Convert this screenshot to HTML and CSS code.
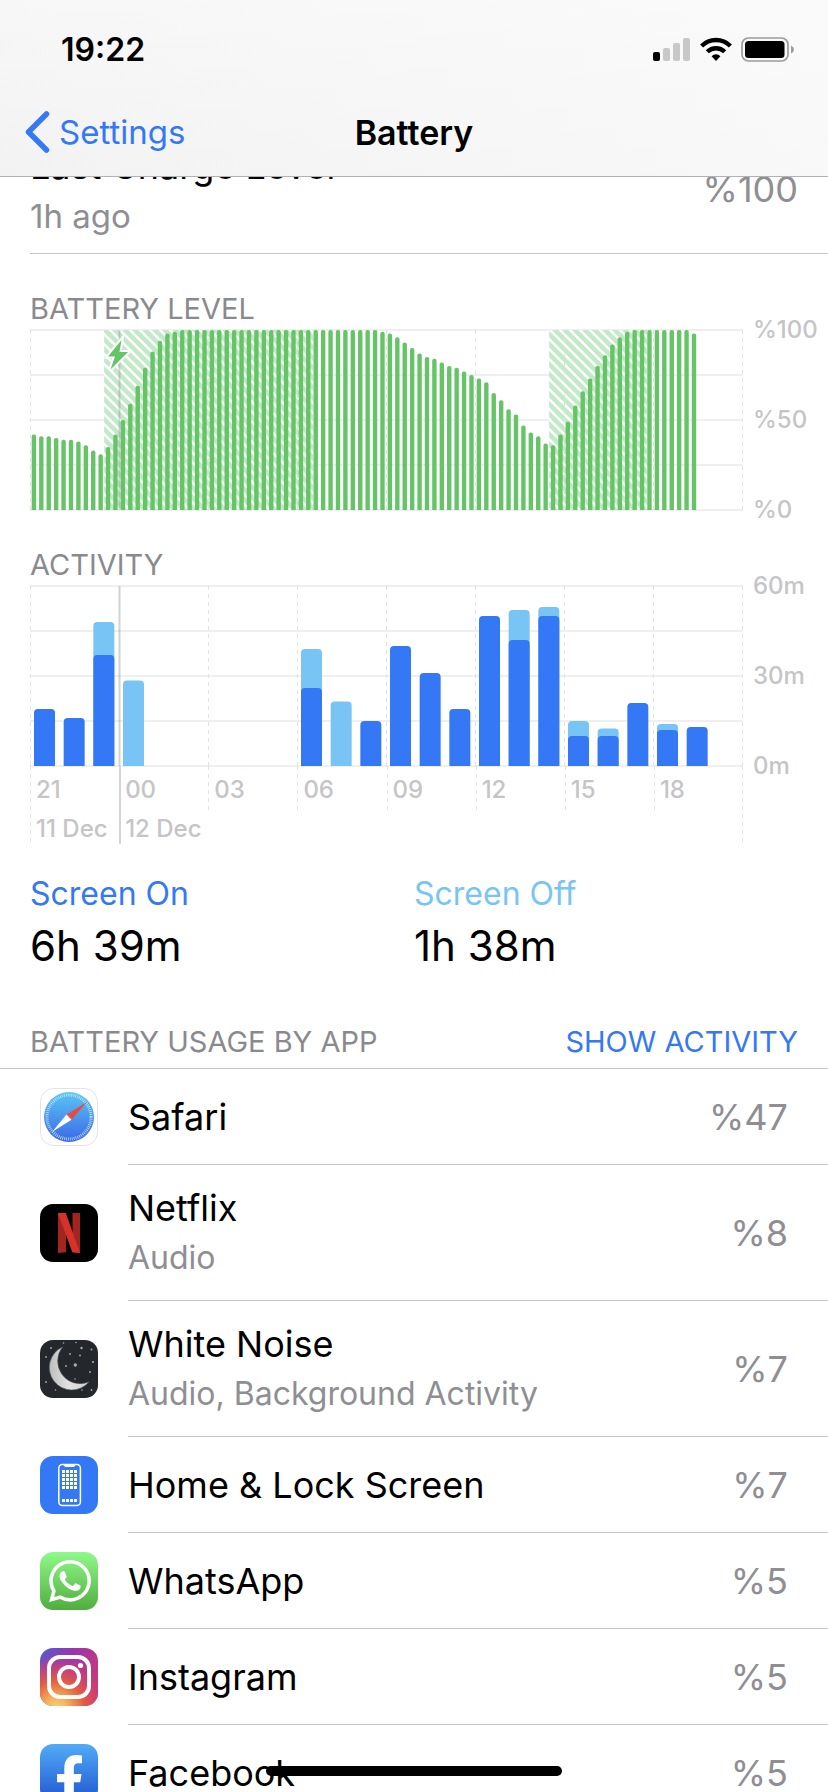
FILE: index.html
```html
<!DOCTYPE html>
<html lang="en">
<head>
<meta charset="utf-8">
<meta name="viewport" content="width=device-width">
<title>Battery</title>
<link rel="stylesheet" href="styles.css">
</head>
<body>
<div class="screen">
  <header class="topbar">
    <div class="status">
      <time class="clock">19:22</time>
      <div class="status-icons">
        <svg width="38" height="25" viewBox="0 0 38 25" aria-label="Signal">
          <rect x="0" y="15" width="7" height="9" rx="2"/>
          <g fill="#c8c8c8"><rect x="10" y="11" width="7" height="13" rx="2"/><rect x="20" y="6" width="7" height="18" rx="2"/><rect x="30" y="1" width="7" height="23" rx="2"/></g>
        </svg>
        <svg width="32" height="25" viewBox="0 0 32 25" aria-label="Wi-Fi">
          <g fill="none" stroke="#000" stroke-width="4.4"><path d="M1.6 9a20.400 20.400 0 0 1 28.800 0"/><path d="M7.300 14.800a12.300 12.300 0 0 1 17.400 0"/></g>
          <path d="M11.600 19.200a6.200 6.200 0 0 1 8.800 0L16 24z"/>
        </svg>
        <svg width="54" height="25" viewBox="0 0 54 25" aria-label="Battery full">
          <rect x="1" y="1" width="46" height="23" rx="6.500" fill="none" stroke="#9b9b9b" stroke-width="1.700"/>
          <rect x="4" y="4" width="39.500" height="17" rx="3.500"/>
          <path d="M50 8.500q3 1.500 3 4t-3 4z" fill="#9b9b9b"/>
        </svg>
      </div>
    </div>
    <nav class="nav">
      <a class="back" href="#settings">
        <svg width="25" height="42" viewBox="0 0 25 42" aria-hidden="true"><path d="M21.500 3L3.500 21L21.500 39" fill="none" stroke="currentColor" stroke-width="5.500" stroke-linecap="round" stroke-linejoin="round"/></svg>
        Settings
      </a>
      <h1 class="title">Battery</h1>
    </nav>
  </header>

  <main class="content">
    <section class="last-charge">
      <div>
        <p class="name">Last Charge Level</p>
        <p class="sub">1h ago</p>
      </div>
      <span class="value">%100</span>
    </section>

    <section class="charts">
      <h2 class="caption">BATTERY LEVEL</h2>
      <div class="chart">
        <svg class="plot" id="level" viewBox="0 0 713 180" role="img" aria-label="Battery level"></svg>
        <div class="scale"><span>%100</span><span>%50</span><span>%0</span></div>
      </div>
      <h2 class="caption caption-next">ACTIVITY</h2>
      <div class="chart">
        <svg class="plot" id="activity" viewBox="0 0 713 180" role="img" aria-label="Activity"></svg>
        <div class="scale"><span>60m</span><span>30m</span><span>0m</span></div>
      </div>
      <div class="time-axis">
        <div class="hours"><span>21</span><span class="midnight">00</span><span>03</span><span>06</span><span>09</span><span>12</span><span>15</span><span>18</span></div>
        <div class="days"><span>11 Dec</span><span class="midnight">12 Dec</span></div>
      </div>
    </section>

    <dl class="totals">
      <div><dt class="on">Screen On</dt><dd>6h 39m</dd></div>
      <div><dt class="off">Screen Off</dt><dd>1h 38m</dd></div>
    </dl>

    <section>
      <div class="usage-head">
        <h2 class="caption">BATTERY USAGE BY APP</h2>
        <button class="toggle" type="button">SHOW ACTIVITY</button>
      </div>
      <ul class="apps">
        <li class="app">
          <svg class="icon" viewBox="0 0 58 58" aria-hidden="true">
            <defs><linearGradient id="safari" x2="0" y2="1"><stop stop-color="#5ac6f4"/><stop offset="1" stop-color="#3a68e8"/></linearGradient></defs>
            <rect x=".5" y=".5" width="57" height="57" rx="13" fill="#fff" stroke="#e3e3e3"/>
            <circle cx="29" cy="29" r="25" fill="url(#safari)"/>
            <circle cx="29" cy="29" r="22" fill="none" stroke="#d5ebfb" stroke-width="3" stroke-dasharray=".7 1.220"/>
            <path d="M47 14L31.500 31.800L26.500 26.500z" fill="#eb4b3d"/>
            <path d="M12 44L26.500 26.500L31.500 31.800z" fill="#fff"/>
          </svg>
          <div class="row"><p class="name">Safari</p><span class="value">%47</span></div>
        </li>
        <li class="app">
          <svg class="icon" viewBox="0 0 58 58" aria-hidden="true">
            <rect width="58" height="58" rx="13"/>
            <path d="M18 9h8v39.300l-8 .7zM32.500 9H40v40l-7.500-.7z" fill="#a3251f"/>
            <path d="M18 9h7.800L40 49l-7.700-.8z" fill="#d7322a"/>
          </svg>
          <div class="row"><div><p class="name">Netflix</p><p class="sub">Audio</p></div><span class="value">%8</span></div>
        </li>
        <li class="app">
          <svg class="icon" viewBox="0 0 58 58" aria-hidden="true">
            <defs><linearGradient id="moon"><stop stop-color="#bdbdbd"/><stop offset=".5" stop-color="#e2e2e2"/><stop offset="1" stop-color="#cfcfcf"/></linearGradient></defs>
            <rect width="58" height="58" rx="13" fill="#24272c"/>
            <path d="M22.500 7A22.500 22.500 0 1 0 49 42A22.700 22.700 0 0 1 22.500 7z" fill="url(#moon)" stroke="#55585c" stroke-width=".6"/>
            <g fill="#a9abad"><circle cx="35.300" cy="25" r="1.700"/><circle cx="41.500" cy="8" r="1.200"/><circle cx="53" cy="22" r="1.100"/><circle cx="30" cy="14" r=".9"/><circle cx="40" cy="15.500" r=".9"/><circle cx="26" cy="26" r=".9"/><circle cx="50" cy="32" r=".9"/><circle cx="35" cy="39" r=".8"/><circle cx="11" cy="8" r=".9"/><circle cx="6" cy="17" r=".9"/><circle cx="6" cy="42" r=".9"/><circle cx="23.500" cy="3" r=".8"/><circle cx="36" cy="2.500" r=".8"/><circle cx="51.500" cy="9.500" r=".9"/><circle cx="15.500" cy="50" r=".8"/><circle cx="42" cy="50" r=".8"/><circle cx="51.500" cy="50" r=".9"/></g>
          </svg>
          <div class="row"><div><p class="name">White Noise</p><p class="sub">Audio, Background Activity</p></div><span class="value">%7</span></div>
        </li>
        <li class="app">
          <svg class="icon" viewBox="0 0 58 58" aria-hidden="true">
            <rect width="58" height="58" rx="13" fill="#3478f6"/>
            <rect x="18.800" y="8.500" width="21.600" height="41" rx="3.500" fill="none" stroke="#fff" stroke-width="1.500"/>
            <path d="M23.500 8h12q-.3 3-2.300 3h-7.400q-2 0-2.300-3z" fill="#fff"/>
            <g stroke="#fff" stroke-width="3" stroke-dasharray="3 1"><path d="M22 15.500h15M22 19.500h15M22 23.500h15M22 27.500h15M22 31.500h15M22 44.500h15"/></g>
          </svg>
          <div class="row"><p class="name">Home &amp; Lock Screen</p><span class="value">%7</span></div>
        </li>
        <li class="app">
          <svg class="icon" viewBox="0 0 58 58" aria-hidden="true">
            <defs><linearGradient id="whatsapp" x2="0" y2="1"><stop stop-color="#90f98b"/><stop offset="1" stop-color="#4fae3d"/></linearGradient></defs>
            <rect width="58" height="58" rx="13" fill="url(#whatsapp)"/>
            <g transform="translate(9 8) scale(1.750)" fill="#fff"><path d="M17.472 14.382c-.297-.149-1.758-.867-2.030-.967-.273-.099-.471-.148-.67.15-.197.297-.767.966-.94 1.164-.173.199-.347.223-.644.075-.297-.15-1.255-.463-2.390-1.475-.883-.788-1.480-1.761-1.653-2.059-.173-.297-.018-.458.13-.606.134-.133.298-.347.446-.52.149-.174.198-.298.298-.497.099-.198.05-.371-.025-.52-.075-.149-.669-1.612-.916-2.207-.242-.579-.487-.5-.669-.51-.173-.008-.371-.01-.57-.01-.198 0-.52.074-.792.372-.272.297-1.040 1.016-1.040 2.479 0 1.462 1.065 2.875 1.213 3.074.149.198 2.096 3.200 5.077 4.487.709.306 1.262.489 1.694.625.712.227 1.360.195 1.871.118.571-.085 1.758-.719 2.006-1.413.248-.694.248-1.289.173-1.413-.074-.124-.272-.198-.57-.347m-5.421 7.403h-.004a9.870 9.870 0 0 1-5.031-1.378l-.361-.214-3.741.982.998-3.648-.235-.374a9.860 9.860 0 0 1-1.510-5.260c.001-5.450 4.436-9.884 9.888-9.884 2.640 0 5.122 1.030 6.988 2.898a9.825 9.825 0 0 1 2.893 6.994c-.003 5.450-4.437 9.884-9.885 9.884m8.413-18.297A11.815 11.815 0 0 0 12.050 0C5.495 0 .16 5.335.157 11.892c0 2.096.547 4.142 1.588 5.945L.057 24l6.305-1.654a11.882 11.882 0 0 0 5.683 1.448h.005c6.554 0 11.890-5.335 11.893-11.893a11.821 11.821 0 0 0-3.480-8.413z"/></g>
          </svg>
          <div class="row"><p class="name">WhatsApp</p><span class="value">%5</span></div>
        </li>
        <li class="app">
          <svg class="icon" viewBox="0 0 58 58" aria-hidden="true">
            <defs>
              <linearGradient id="insta-base" x1="0" y1="0" x2="1" y2=".6"><stop stop-color="#4b5fd0"/><stop offset=".45" stop-color="#9a35ae"/><stop offset="1" stop-color="#cb3a72"/></linearGradient>
              <radialGradient id="insta-glow" cx=".28" cy="1.050" r=".95"><stop stop-color="#f8d27c"/><stop offset=".2" stop-color="#f3b45f"/><stop offset=".5" stop-color="#e5603f"/><stop offset=".78" stop-color="#cf3f72" stop-opacity=".7"/><stop offset="1" stop-color="#b03a9a" stop-opacity="0"/></radialGradient>
            </defs>
            <rect width="58" height="58" rx="13" fill="url(#insta-base)"/>
            <rect width="58" height="58" rx="13" fill="url(#insta-glow)"/>
            <g fill="none" stroke="#fff" stroke-width="4"><rect x="9" y="9" width="40" height="40" rx="11"/><circle cx="29" cy="29" r="10"/></g>
            <circle cx="40.500" cy="17.500" r="2.600" fill="#fff"/>
          </svg>
          <div class="row"><p class="name">Instagram</p><span class="value">%5</span></div>
        </li>
        <li class="app">
          <svg class="icon" viewBox="0 0 58 58" aria-hidden="true">
            <defs><linearGradient id="facebook" x2="0" y2="1"><stop stop-color="#51abf7"/><stop offset="1" stop-color="#2055cf"/></linearGradient></defs>
            <rect width="58" height="58" rx="13" fill="url(#facebook)"/>
            <path d="M24.300 58V38.300H17V30h7.300v-6c0-8.500 4.700-13 12-13 2.200 0 4 .2 5.700.5v7.700h-3.500c-3.500 0-4.700 2-4.700 4.600V30h7.700l-1.300 8.300h-6.400V58z" fill="#fff"/>
          </svg>
          <div class="row"><p class="name">Facebook</p><span class="value">%5</span></div>
        </li>
      </ul>
    </section>
  </main>
  <div class="home-indicator"></div>
</div>
<script src="charts.js"></script>
</body>
</html>
```
FILE: styles.css
```css
* { box-sizing: border-box; margin: 0; padding: 0; }

body {
  background: #fff;
  color: #000;
  font-family: Inter, "Liberation Sans", sans-serif;
}

.screen {
  position: relative;
  height: 100vh;
  overflow: hidden;
}

/* Status and navigation bars */
.topbar {
  position: relative;
  z-index: 1;
  background: linear-gradient(100deg, rgba(242, 242, 242, 0.4), rgba(250, 250, 250, 0.8)), linear-gradient(#fbfbfb, #f2f2f2);
  border-bottom: 1px solid #b2b2b4;
}

.status {
  display: flex;
  align-items: center;
  justify-content: space-between;
  height: 88px;
  padding: 11px 33px 0 61px;
}

.clock { font-size: 32px; font-weight: 600; }

.status-icons { display: flex; align-items: center; gap: 9px; }

.nav {
  display: grid;
  grid-template-columns: 1fr auto 1fr;
  align-items: center;
  height: 88px;
  padding: 0 25px;
}

.back {
  display: flex;
  align-items: center;
  gap: 9px;
  color: #3478f6;
  font-size: 33px;
  text-decoration: none;
}

.title { font-size: 34px; font-weight: 600; }

/* Scrolled content */
.content { margin-top: -36px; }

.name { font-size: 36px; line-height: 50px; }
.sub { color: #8e8e93; font-size: 32px; line-height: 50px; }
.value { color: #8e8e93; font-size: 36px; }

.last-charge {
  display: flex;
  align-items: flex-start;
  justify-content: space-between;
  margin-left: 30px;
  padding: 0 30px 12px 0;
  border-bottom: 1px solid #c6c6c8;
}
.last-charge .sub { font-size: 33px; }
.last-charge .value { line-height: 96px; height: 96px; }

.caption {
  color: #8a8a8e;
  font-size: 29px;
  font-weight: 400;
  line-height: 36px;
}

/* Charts */
.charts { padding: 37px 0 0 30px; }
.charts .caption { margin-bottom: 3px; }
.charts .caption-next { margin-top: 37px; }

.chart { display: flex; }

.plot {
  display: block;
  flex: 1;
  min-width: 0;
  overflow: visible;
}

.scale {
  display: flex;
  flex-direction: column;
  justify-content: space-between;
  width: 85px;
  margin: -14px 0;
  padding-left: 10px;
}

.scale, .time-axis {
  color: #c5c5c7;
  font-size: 24px;
  font-weight: 500;
  line-height: 28px;
}

.grid-line { stroke: #efefef; stroke-width: 2; }
.hour-line { stroke: #e2e2e4; stroke-width: 1; stroke-dasharray: 4 4; }
.midnight-line { stroke: #8e8e93; stroke-opacity: 0.4; stroke-width: 2; }
.charging { fill: url(#hatch); }
.level-bar { fill: #65c466; }
.screen-off { fill: #78c5f5; }
.screen-on { fill: #3478f6; }

.time-axis {
  margin-right: 85px;
  background: repeating-linear-gradient(#e2e2e4 0 4px, transparent 4px 8px) right / 1px 100% no-repeat;
}

.hours, .days { display: grid; grid-template-columns: repeat(8, 1fr); }
.hours { line-height: 48px; }
.days { line-height: 30px; }
.days .midnight { grid-column: span 7; }

.hours span, .days span {
  padding-left: 6px;
  white-space: nowrap;
  background: repeating-linear-gradient(#e2e2e4 0 4px, transparent 4px 8px) left / 1px 100% no-repeat;
}

.hours .midnight, .days .midnight {
  background: linear-gradient(#d4d4d6, #d4d4d6) left / 2px 100% no-repeat;
}

/* Totals */
.totals {
  display: grid;
  grid-template-columns: 1fr 1fr;
  padding-top: 28px;
}
.totals div:first-child { padding-left: 30px; }
.totals dt { font-size: 32px; line-height: 44px; }
.totals dd { font-size: 42px; line-height: 60px; }
.on { color: #3478f6; }
.off { color: #78c5f5; }

/* Usage list */
.usage-head {
  display: flex;
  justify-content: space-between;
  padding: 48px 30px 8px;
  border-bottom: 1px solid #c6c6c8;
}

.toggle {
  border: 0;
  background: none;
  color: #3478f6;
  font: inherit;
  font-size: 29px;
  line-height: 36px;
}

.apps { list-style: none; }

.app {
  display: flex;
  align-items: center;
  gap: 30px;
  padding-left: 40px;
}

.icon { display: block; flex: none; width: 58px; height: 58px; }

.row {
  display: flex;
  flex: 1;
  align-items: center;
  justify-content: space-between;
  min-height: 96px;
  padding: 18px 40px 17px 0;
  border-bottom: 1px solid #c6c6c8;
}

.home-indicator {
  position: absolute;
  bottom: 16px;
  left: 50%;
  width: 296px;
  height: 10px;
  margin-left: -148px;
  border-radius: 5px;
  background: #000;
}
```
FILE: charts.js
```js
const HEIGHT = 180;
const WIDTH = 712;

// Charge in percent, one value for every quarter of an hour.
const level = [
  42, 41, 41, 40, 39, 39, 38, 36, 33, 31, 35, 42, 50, 59, 69, 79, 88, 94, 98, 99,
  ...Array(27).fill(100),
  99, 98, 96, 93, 90, 87, 85, 84, 82, 80, 79, 77, 75, 73, 71, 65, 61, 56, 53, 47,
  43, 41, 37, 36, 42, 49, 58, 66, 73, 80, 86, 92, 96, 99,
  ...Array(8).fill(100),
  98
];

// First quarter and number of quarters spent charging.
const charging = [[10, 28], [70, 13]];

// Minutes per hour: [in use, with the screen on].
const activity = [
  [19, 19], [16, 16], [48, 37], [28.5, 0], [0, 0], [0, 0], [0, 0], [0, 0], [0, 0],
  [39, 26], [21.5, 0], [15, 15], [40, 40], [31, 31], [19, 19], [50, 50], [52, 42],
  [53, 50], [15, 10], [12.5, 10], [21, 21], [14, 12], [13, 13]
];

function bar(cls, x, width, height, radius) {
  if (!height) return '';
  const r = Math.min(radius, height);
  return `<path class="${cls}" d="M${x} ${HEIGHT}V${HEIGHT - height + r}q0 ${-r} ${r} ${-r}h${width - 2 * r}q${r} 0 ${r} ${r}V${HEIGHT}z"/>`;
}

function rows() {
  let out = '';
  for (let i = 0; i <= 4; i++) out += `<path class="grid-line" d="M0 ${i * 45}H713"/>`;
  return out;
}

function columns() {
  let out = '';
  for (let i = 0; i <= 8; i++) {
    out += `<path class="${i === 1 ? 'midnight-line' : 'hour-line'}" d="M${i * 89 + 0.5} 0V${HEIGHT}"/>`;
  }
  return out;
}

const slot = WIDTH / 96;
document.getElementById('level').innerHTML =
  `<defs><pattern id="hatch" width="10" height="10" patternUnits="userSpaceOnUse">
    <rect width="10" height="10" fill="#c3eac8"/>
    <path d="M-3 -3L13 13M-3 7L3 13M7 -3L13 3" stroke="#fff" stroke-width="2.6"/>
  </pattern></defs>` +
  rows() +
  charging.map(([from, n]) => `<rect class="charging" x="${from * slot}" y="0" width="${n * slot + 1.5}" height="${HEIGHT}"/>`).join('') +
  columns() +
  level.map((v, i) => bar('level-bar', i * slot + 1.7, 4.4, v * HEIGHT / 100, 2)).join('') +
  '<path d="M91.500 10L78 26.500h7L80.500 39.500L98 22h-8.500z" fill="#65c466" stroke="#fff" stroke-width="4" stroke-linejoin="miter" paint-order="stroke"/>';

const hour = WIDTH / 24;
document.getElementById('activity').innerHTML =
  rows() + columns() +
  activity.map(([total, on], i) =>
    (total > on ? bar('screen-off', i * hour + 4, 21, total * 3, 4) : '') +
    bar('screen-on', i * hour + 4, 21, on * 3, 4)).join('');
```
